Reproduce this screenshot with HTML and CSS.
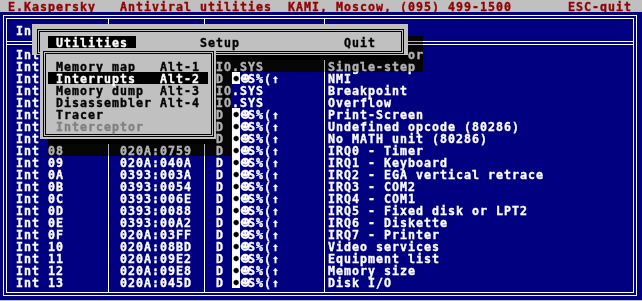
FILE: index.html
```html
<!DOCTYPE html>
<html lang="en">
<head>
  <meta charset="UTF-8">
  <title>Antiviral utilities - Interrupts</title>
  <link rel="stylesheet" href="styles.css">
</head>
<body>

<div class="screen">
  <div class="title line"> E.Kaspersky   Antiviral utilities  KAMI, Moscow, (095) 499-1500       ESC-quit </div>

  <div class="panel">
    <div class="frame-outer"></div>
    <div class="frame-inner"></div>
    <div class="vline v1"></div>
    <div class="vline v2"></div>
    <div class="vline v3"></div>
    <div class="sep"></div>

    <div class="table">
      <div class="row line"><span>Interrupt</span><span>Address</span><span>Owner</span><span>Purpose</span></div>
      <div class="row line"></div>
      <div class="row line"><span>Int 00</span><span>0070:06F4</span><span>IO.SYS</span><span>Divide error</span></div>
      <div class="row line"><span>Int 01</span><span>0070:06F4</span><span>IO.SYS</span><span>Single-step</span></div>
      <div class="row line"><span>Int 02</span><span>0393:0016</span><span>D <i class="inv">•</i><i class="sym">☻</i>S%(↑</span><span>NMI</span></div>
      <div class="row line"><span>Int 03</span><span>0070:06F4</span><span>IO.SYS</span><span>Breakpoint</span></div>
      <div class="row line"><span>Int 04</span><span>0070:06F4</span><span>IO.SYS</span><span>Overflow</span></div>
      <div class="row line"><span>Int 05</span><span>020A:0700</span><span>D <i class="inv">•</i><i class="sym">☻</i>S%(↑</span><span>Print-Screen</span></div>
      <div class="row line"><span>Int 06</span><span>020A:0735</span><span>D <i class="inv">•</i><i class="sym">☻</i>S%(↑</span><span>Undefined opcode (80286)</span></div>
      <div class="row line"><span>Int 07</span><span>020A:0747</span><span>D <i class="inv">•</i><i class="sym">☻</i>S%(↑</span><span>No MATH unit (80286)</span></div>
      <div class="row line"><span>Int 08</span><span>020A:0759</span><span>D <i class="inv">•</i><i class="sym">☻</i>S%(↑</span><span>IRQ0 - Timer</span></div>
      <div class="row line"><span>Int 09</span><span>020A:040A</span><span>D <i class="inv">•</i><i class="sym">☻</i>S%(↑</span><span>IRQ1 - Keyboard</span></div>
      <div class="row line"><span>Int 0A</span><span>0393:003A</span><span>D <i class="inv">•</i><i class="sym">☻</i>S%(↑</span><span>IRQ2 - EGA vertical retrace</span></div>
      <div class="row line"><span>Int 0B</span><span>0393:0054</span><span>D <i class="inv">•</i><i class="sym">☻</i>S%(↑</span><span>IRQ3 - COM2</span></div>
      <div class="row line"><span>Int 0C</span><span>0393:006E</span><span>D <i class="inv">•</i><i class="sym">☻</i>S%(↑</span><span>IRQ4 - COM1</span></div>
      <div class="row line"><span>Int 0D</span><span>0393:0088</span><span>D <i class="inv">•</i><i class="sym">☻</i>S%(↑</span><span>IRQ5 - Fixed disk or LPT2</span></div>
      <div class="row line"><span>Int 0E</span><span>0393:00A2</span><span>D <i class="inv">•</i><i class="sym">☻</i>S%(↑</span><span>IRQ6 - Diskette</span></div>
      <div class="row line"><span>Int 0F</span><span>020A:03FF</span><span>D <i class="inv">•</i><i class="sym">☻</i>S%(↑</span><span>IRQ7 - Printer</span></div>
      <div class="row line"><span>Int 10</span><span>020A:08BD</span><span>D <i class="inv">•</i><i class="sym">☻</i>S%(↑</span><span>Video services</span></div>
      <div class="row line"><span>Int 11</span><span>020A:09E2</span><span>D <i class="inv">•</i><i class="sym">☻</i>S%(↑</span><span>Equipment list</span></div>
      <div class="row line"><span>Int 12</span><span>020A:09E8</span><span>D <i class="inv">•</i><i class="sym">☻</i>S%(↑</span><span>Memory size</span></div>
      <div class="row line"><span>Int 13</span><span>020A:045D</span><span>D <i class="inv">•</i><i class="sym">☻</i>S%(↑</span><span>Disk I/O</span></div>
    </div>
  </div>

  <!-- shadows of the menu bar -->
  <div class="shadow sh-bar-right"></div>
  <div class="shadow-lip sh-bar-lip"></div>
  <div class="shadow sh-bar-bottom"></div>

  <div class="menubar">
    <div class="menubar-frame">
      <div class="menu-items">
        <span class="mi line active">Utilities</span>
        <span class="mi line mi-setup">Setup</span>
        <span class="mi line mi-quit">Quit</span>
      </div>
    </div>
  </div>

  <!-- shadows of the dropdown -->
  <div class="shadow sh-dd-right"></div>
  <div class="shadow-lip sh-dd-lip"></div>
  <div class="shadow sh-dd-bottom"></div>

  <div class="dropdown">
    <div class="dropdown-frame">
      <div class="dd-item line"><span class="dd-label">Memory map</span><span>Alt-1</span></div>
      <div class="dd-item line active"><span class="dd-label">Interrupts</span><span>Alt-2</span></div>
      <div class="dd-item line"><span class="dd-label">Memory dump</span><span>Alt-3</span></div>
      <div class="dd-item line"><span class="dd-label">Disassembler</span><span>Alt-4</span></div>
      <div class="dd-item line"><span class="dd-label">Tracer</span></div>
      <div class="dd-item line disabled"><span class="dd-label">Interceptor</span></div>
    </div>
  </div>
</div>

</body>
</html>
```

FILE: styles.css
```css
body {
  margin: 0;
  background: linear-gradient(#c0c0c0 12px, #000080 12px);
  font-family: "DejaVu Sans Mono", monospace;
  font-weight: bold;
  font-size: 11.63px;
  letter-spacing: 1px;
  -webkit-text-stroke: 0.35px currentColor;
}
.screen {
  display: grid;
  grid-template-columns: repeat(80, 8px);
  grid-template-rows: repeat(25, 12px);
  width: 640px;
}
.line {
  height: 12px;
  line-height: 14px;
  white-space: pre;
}
.title {
  grid-column: 1 / -1;
  grid-row: 1;
  background-color: #c0c0c0;
  color: #900000;
}

/* table panel */
.panel {
  grid-column: 1 / -1;
  grid-row: 2 / 26;
  display: grid;
  grid-template-columns: repeat(80, 8px);
  grid-template-rows: repeat(24, 12px);
  background-color: #000080;
  color: #fff;
}
.frame-outer, .frame-inner {
  grid-column: 1 / -1;
  grid-row: 1 / -1;
  border: 1px solid #fff;
}
.frame-outer {
  margin: 3px 3px 4px 3px;
}
.frame-inner {
  margin: 6px 6px 7px 6px;
}
.vline {
  grid-row: 1 / -1;
  width: 0;
  margin: 7px 0 8px 4px;
  border-left: 1px solid #fff;
}
.v1 { grid-column: 14; }
.v2 { grid-column: 26; }
.v3 { grid-column: 41; }
.sep {
  grid-column: 1 / -1;
  grid-row: 3;
  align-self: start;
  height: 2px;
  margin: 5px 6px 0 6px;
  border-top: 1px solid #fff;
  border-bottom: 1px solid #fff;
}
.table {
  grid-column: 1 / -1;
  grid-row: 2 / 24;
}
.row {
  display: grid;
  grid-template-columns: 104px 96px 112px 1fr;
  padding-left: 16px;
}
.row i {
  display: inline-block;
  width: 8px;
  height: 12px;
  vertical-align: top;
  font-style: normal;
  letter-spacing: 0;
  text-align: center;
}
.row .inv {
  background-color: #fff;
  color: #000;
  font-size: 14px;
}
.row .sym {
  font-family: "DejaVu Sans", sans-serif;
  font-size: 10px;
}

/* shadows dim what lies under them */
.shadow {
  backdrop-filter: grayscale(1) brightness(0.7);
}
.shadow-lip {
  background-color: #000;
}
.sh-bar-right {
  grid-column: 52 / 54;
  grid-row: 4 / 6;
}
.sh-bar-lip {
  grid-column: 7 / 52;
  grid-row: 5;
  margin-top: 7px;
}
.sh-bar-bottom {
  grid-column: 7 / 54;
  grid-row: 6;
}
.sh-dd-right {
  grid-column: 28 / 30;
  grid-row: 7 / 13;
}
.sh-dd-lip {
  grid-column: 7 / 28;
  grid-row: 12;
  margin-top: 7px;
}
.sh-dd-bottom {
  grid-column: 7 / 30;
  grid-row: 13;
}

/* menu bar */
.menubar {
  grid-column: 5 / 52;
  grid-row: 3 / 6;
  z-index: 1;
  margin-bottom: 5px;
  display: flex;
  flex-direction: column;
  background-color: #c0c0c0;
  color: #000;
}
.menubar-frame {
  flex: 1;
  margin: 5px 4px 1px 5px;
  border: 3px double #000;
}
.menu-items {
  display: flex;
  padding: 4px 0 0 8px;
}
.mi {
  padding: 0 8px;
}
.mi.active {
  background-color: #000;
  color: #fff;
}
.mi-setup { margin-left: 56px; }
.mi-quit { margin-left: 88px; }

/* dropdown */
.dropdown {
  grid-column: 6 / 28;
  grid-row: 5 / 13;
  z-index: 2;
  margin-bottom: 5px;
  display: flex;
  flex-direction: column;
  background-color: #c0c0c0;
  color: #000;
}
.dropdown-frame {
  flex: 1;
  margin: 3px 2px 2px 3px;
  padding: 6px 0 0 2px;
  border: 3px double #000;
}
.dd-item {
  display: flex;
  width: 160px;
  padding-left: 8px;
  box-sizing: border-box;
}
.dd-label {
  width: 104px;
}
.dd-item.active {
  background-color: #000;
  color: #fff;
}
.dd-item.disabled {
  color: #808080;
}
```
